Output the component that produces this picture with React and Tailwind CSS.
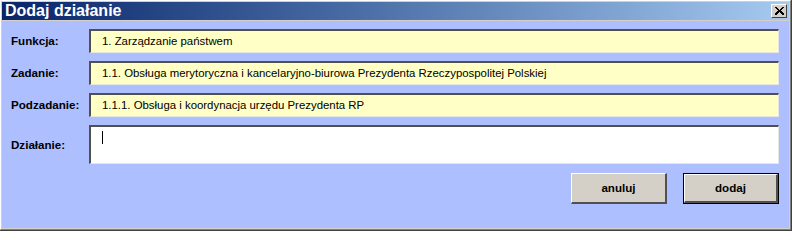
import React from "react";

const font = { fontFamily: '"Liberation Sans", Arial, sans-serif' };

function Field({ children, white, tall }) {
    return (
        <div
            className={`flex-1 border-t-2 border-l-2 border-t-[#505050] border-l-[#505050] border-b border-r border-b-[#e8e6e0] border-r-[#e8e6e0] ${
                white ? "bg-white" : "bg-[#ffffc6]"
            } ${tall ? "h-[39px] items-start pt-[4px]" : "h-[24px] items-center"} flex pl-[11px] text-[11.4px] text-black`}
        >
            {children}
        </div>
    );
}

function Row({ label, children }) {
    return (
        <div className="flex items-center">
            <div className="w-[81px] text-[11.6px] font-bold text-black pl-[3px]">{label}</div>
            {children}
        </div>
    );
}

function Button({ children, primary }) {
    return (
        <div className={primary ? "border border-black" : ""}>
            <div
                className={`${primary ? "w-[94px] h-[29px]" : "w-[96px] h-[31px]"} bg-[#d4d0c8] border-t border-l border-t-white border-l-white border-b-2 border-r-2 border-b-[#505050] border-r-[#505050] flex items-center justify-center text-[11.6px] font-bold text-black`}
            >
                {children}
            </div>
        </div>
    );
}

export default function App() {
    return (
        <div className="w-[792px] h-[231px] bg-[#d4d0c8] border-b border-r border-b-[#404040] border-r-[#404040]" style={font}>
            <div className="h-full border-t border-l border-t-white border-l-white border-b border-r border-b-[#808080] border-r-[#808080] p-px flex flex-col">
                <div className="h-[18px] flex items-center justify-between bg-gradient-to-r from-[#0a246a] to-[#a6caf0] pl-[3px] pr-[2px]">
                    <span className="text-white font-bold text-[16px] leading-none">Dodaj działanie</span>
                    <div className="w-[16px] h-[14px] bg-[#d4d0c8] border-t border-l border-t-white border-l-white border-b border-r border-b-[#404040] border-r-[#404040] flex items-center justify-center">
                        <svg width="9" height="8" viewBox="0 0 9 8" shapeRendering="crispEdges">
                            <path d="M0 0h2v1h1v1h1v1h1V2h1V1h1V0h2v1H8v1H7v1H6v1h1v1h1v1h1v2H7V7H6V6H5V5H4v1H3v1H2v1H0V6h1V5h1V4h1V3H2V2H1V1H0z" fill="#000" />
                        </svg>
                    </div>
                </div>
                <div className="flex-1 mt-px bg-[#aebfff] flex flex-col pt-[8px] pl-[6px] pr-[10px] gap-[8px]">
                    <Row label="Funkcja:">
                        <Field>1. Zarządzanie państwem</Field>
                    </Row>
                    <Row label="Zadanie:">
                        <Field>1.1. Obsługa merytoryczna i kancelaryjno-biurowa Prezydenta Rzeczypospolitej Polskiej</Field>
                    </Row>
                    <Row label="Podzadanie:">
                        <Field>1.1.1. Obsługa i koordynacja urzędu Prezydenta RP</Field>
                    </Row>
                    <Row label="Działanie:">
                        <Field white tall>
                            <span className="w-px h-[13px] bg-black" />
                        </Field>
                    </Row>
                    <div className="flex justify-end gap-[16px] mt-[1px]">
                        <Button>anuluj</Button>
                        <Button primary>dodaj</Button>
                    </div>
                </div>
            </div>
        </div>
    );
}
